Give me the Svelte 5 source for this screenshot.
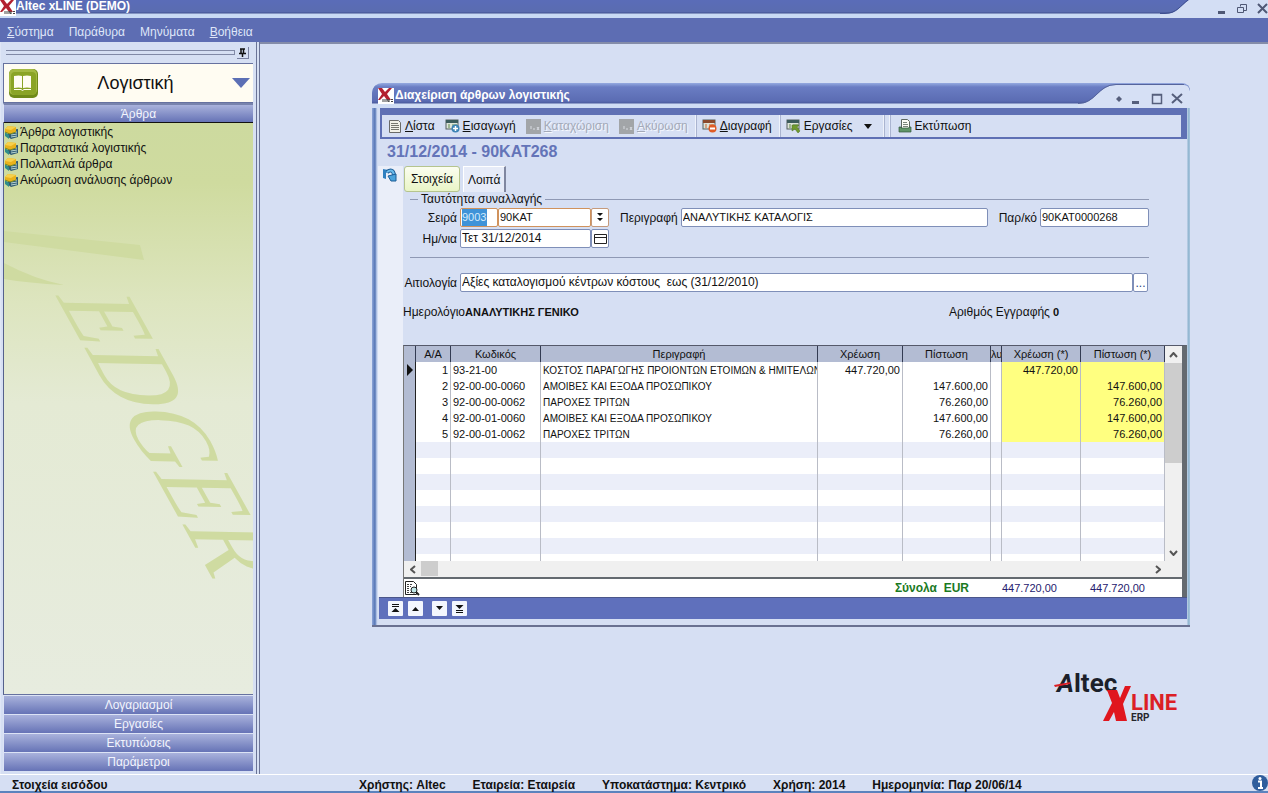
<script>
  const menus = ["Σύστημα", "Παράθυρα", "Μηνύματα", "Βοήθεια"];
  const shortcuts = ["Άρθρα λογιστικής", "Παραστατικά λογιστικής", "Πολλαπλά άρθρα", "Ακύρωση ανάλυσης άρθρων"];
  const groups = ["Λογαριασμοί", "Εργασίες", "Εκτυπώσεις", "Παράμετροι"];

  const columns = ["Α/Α", "Κωδικός", "Περιγραφή", "Χρέωση", "Πίστωση", "λυ", "Χρέωση (*)", "Πίστωση (*)"];
  const entries = [
    { code: "93-21-00", text: "ΚΟΣΤΟΣ ΠΑΡΑΓΩΓΗΣ ΠΡΟΙΟΝΤΩΝ ΕΤΟΙΜΩΝ & ΗΜΙΤΕΛΩΝ", debit: "447.720,00", credit: "" },
    { code: "92-00-00-0060", text: "ΑΜΟΙΒΕΣ ΚΑΙ ΕΞΟΔΑ ΠΡΟΣΩΠΙΚΟΥ", debit: "", credit: "147.600,00" },
    { code: "92-00-00-0062", text: "ΠΑΡΟΧΕΣ ΤΡΙΤΩΝ", debit: "", credit: "76.260,00" },
    { code: "92-00-01-0060", text: "ΑΜΟΙΒΕΣ ΚΑΙ ΕΞΟΔΑ ΠΡΟΣΩΠΙΚΟΥ", debit: "", credit: "147.600,00" },
    { code: "92-00-01-0062", text: "ΠΑΡΟΧΕΣ ΤΡΙΤΩΝ", debit: "", credit: "76.260,00" }
  ];
  const emptyRows = [0, 1, 2, 3, 4, 5, 6, 7];

  let series = "9003";
  let seriesName = "90ΚΑΤ";
  let date = "Τετ 31/12/2014";
  let description = "ΑΝΑΛΥΤΙΚΗΣ ΚΑΤΑΛΟΓΙΣ";
  let voucher = "90ΚΑΤ0000268";
  let reason = "Αξίες καταλογισμού κέντρων κόστους  εως (31/12/2010)";
</script>

<style>
  :global(body) {
    margin: 0;
    background: #d6dff3;
  }
  .app {
    display: flex;
    flex-direction: column;
    min-height: 100vh;
    overflow: hidden;
    font-family: "Liberation Sans", Arial, sans-serif;
    font-size: 12px;
    line-height: 16px;
    color: #111;
    background: #d6dff3;
  }
  button,
  input {
    box-sizing: border-box;
    margin: 0;
    font: inherit;
    color: inherit;
  }
  button {
    display: flex;
    align-items: center;
    justify-content: center;
    padding: 0;
    border: 0;
    background: none;
    white-space: nowrap;
  }
  svg {
    display: block;
    flex: none;
  }

  /* main title bar and menu */
  .titlebar {
    display: flex;
    height: 18px;
    background: linear-gradient(#5a6cb8 0, #5a6cb0 12px, #3f4f90 13px, #c9daf5 14px, #c9daf5 100%);
  }
  .titlebar h1 {
    flex: 1;
    margin: 0;
    font-size: 12px;
    line-height: 12px;
    color: #fff;
  }
  .menu {
    display: flex;
    align-items: center;
    gap: 15px;
    height: 20px;
    padding: 4px 0 0 7px;
    background: #5d6db3;
  }
  .menu button {
    display: block;
    color: #dfe6f8;
  }
  .menu button:first-child::first-letter,
  .menu button:last-child::first-letter {
    text-decoration: underline;
  }
  .tools button span {
    display: block;
  }
  .tools button span::first-letter {
    text-decoration: underline;
  }
  .main {
    display: flex;
    flex: 1;
  }

  /* sidebar */
  .sidebar {
    display: flex;
    flex: none;
    flex-direction: column;
    width: 250px;
    padding: 0 3px 3px 2px;
    border-left: 1px solid #dfe6f6;
    border-right: 4px double #6a7396;
    background: #d6dff3;
  }
  .grip {
    display: flex;
    align-items: center;
    gap: 2px;
    height: 21px;
    padding: 0 4px 0 3px;
  }
  .grip i {
    flex: 1;
    height: 3px;
    border: solid #8189a6;
    border-width: 1px 1px 1px 0;
  }
  .pin {
    width: 12px;
    height: 12px;
    border: solid #7880a0;
    border-width: 0 1px 1px 0;
  }
  .module {
    display: flex;
    align-items: center;
    height: 38px;
    padding: 0 3px 0 4px;
    border: 1px solid #66719f;
    border-right: 0;
    background: #fffcf2;
  }
  .module h2 {
    flex: 1;
    margin: 0;
    font-size: 18px;
    line-height: 24px;
    font-weight: normal;
    text-align: center;
  }
  .group {
    width: 100%;
    height: 19px;
    padding-left: 20px;
    border: solid #dce3f5;
    border-width: 1px 0 0 1px;
    color: #f3f5fd;
    background: linear-gradient(#a9b2dc, #6673b6);
  }
  .group.open {
    height: 20px;
    border-bottom: 1px solid #111;
    border-top: 2px solid #7883ad;
  }
  .shortcuts {
    position: relative;
    flex: 1;
    overflow: hidden;
    border-left: 1px solid #55618c;
    border-bottom: 1px solid #66719f;
    background: linear-gradient(#cdda9f 0, #cfdb9f 60px, #dde5bf 180px, #e4ead4 280px, #e7ecdf 100%);
  }
  .backdrop {
    position: absolute;
    top: 0;
    left: 0;
  }
  .shortcuts ul {
    position: relative;
    margin: 0;
    padding: 1px 0 0;
    list-style: none;
  }
  .shortcuts button {
    gap: 1px;
    height: 16px;
  }

  /* desktop and window */
  .desktop {
    display: flex;
    flex: 1;
    flex-direction: column;
    min-width: 0;
    padding: 39px 78px 0 112px;
    border-top: 2px solid #848ca8;
  }
  .window {
    padding: 0 3px 6px 6px;
    border-radius: 10px 8px 0 0;
    background: linear-gradient(90deg, #8ea6d8 0, #5575b5 3px, #c8d6f0 5px, #d6dff3 6px, #d6dff3 calc(100% - 3px), #8fb4cf calc(100% - 2px), #a6c4dc 100%);
    border-bottom: 2px solid #6a7191;
  }
  .caption {
    display: flex;
    align-items: stretch;
    height: 25px;
    margin: 0 -3px 0 -6px;
    padding-left: 6px;
    border-radius: 10px 8px 0 0;
    background: linear-gradient(#95aae0 0, #6a7dc3 4px, #5b6cb3 18px, #4c5c9f 20px, #d0ddf5 21px, #d0ddf5 100%);
    overflow: hidden;
  }
  .caption h2 {
    flex: 1;
    margin: 0;
    padding-left: 1px;
    font-size: 12px;
    line-height: 25px;
    color: #fff;
  }
  .caption > :global(svg:first-child) {
    margin-top: 5px;
  }
  .tools {
    display: flex;
    align-items: center;
    height: 22px;
    margin-left: 2px;
    padding-left: 2px;
    border: solid #5f70b4;
    border-width: 7px 6px 2px 2px;
    background: #d6dff3;
  }
  .tools button {
    gap: 3px;
    padding: 0 6px 0 4px;
  }
  .tools button:disabled {
    color: #a3a9b8;
    text-shadow: 1px 1px #f4f7fe;
  }
  .tools hr {
    width: 1px;
    height: 22px;
    margin: 0 1px;
    border: solid #aab4d0;
    border-width: 0 1px 0 0;
    background: #eef2fb;
  }
  .tools hr + hr {
    margin: 0 3px;
  }
  .record {
    margin: 0;
    padding: 3px 9px 4px;
    font-size: 16px;
    line-height: 20px;
    color: #6474b8;
  }
  .client {
    display: flex;
  }
  .rail {
    width: 25px;
    background: #eaeef9;
  }
  .rail button {
    margin: 2px 0 0 4px;
  }
  .content {
    flex: 1;
    min-width: 0;
  }
  .tabs {
    display: flex;
    align-items: flex-end;
    height: 26px;
    gap: 3px;
    padding-left: 1px;
  }
  .tabs button {
    height: 26px;
    padding: 0 4px;
    border: 1px solid #fff;
    border-right: 2px solid #8087a0;
    border-bottom: 0;
    background: #e6ebf8;
  }
  .tabs button.active {
    padding: 0 6px;
    border: 1px solid #b5c48e;
    border-radius: 3px;
    background: linear-gradient(#fbfdf0, #e9f5c6);
  }

  /* form */
  fieldset {
    height: 66px;
    margin: 0 38px 0 7px;
    padding: 0;
    border: solid #8f99b4;
    border-width: 1px 0;
    box-sizing: border-box;
    min-width: 0;
  }
  legend {
    margin-left: 8px;
    padding: 0 3px;
    line-height: 15px;
  }
  .line {
    display: flex;
    align-items: center;
    height: 21px;
  }
  .line label {
    flex: none;
    padding-right: 3px;
    text-align: right;
    white-space: nowrap;
  }
  .line label.lead {
    width: 47px;
  }
  .line.wide label.lead {
    width: 54px;
  }
  .line input,
  .line button {
    height: 19px;
    min-width: 0;
    border: 1px solid #7f8fb8;
    border-radius: 2px;
    background: #fff;
  }
  .line input {
    padding: 0 1px 2px;
    font-size: 11px;
  }
  .line button {
    width: 18px;
    flex: none;
  }
  .line input.series {
    width: 38px;
    border-color: #d0925c;
    color: #d6ebfb;
    background: linear-gradient(90deg, #fff 1px, #3f93d8 1px, #3f93d8 26px, #fff 26px);
  }
  .line input.name {
    width: 93px;
    border-color: #d0925c;
  }
  .line button.pick {
    border-color: #c59a7c;
  }
  .line input.date {
    width: 131px;
    font-size: 12px;
  }
  .line input.grow {
    flex: 1;
  }
  .line input.voucher {
    width: 109px;
  }
  .line .gap {
    margin-left: 11px;
  }
  .line.wide {
    padding: 14px 39px 0 0;
  }
  .line.wide input {
    font-size: 12px;
  }
  .line button.more {
    width: 15px;
    color: #2c4486;
  }
  .journal {
    display: flex;
    padding: 11px 128px 25px 0;
  }
  .journal b {
    flex: 1;
    font-size: 11px;
  }
  .journal .number {
    flex: none;
    padding-left: 3px;
  }

  /* entries */
  .grid {
    border-top: 1px solid #55596a;
    border-right: 5px solid #646a70;
    border-left: 1px solid #777;
    background: #f0f0f0;
  }
  .scroller {
    display: flex;
    height: 215px;
  }
  .rows {
    flex: 1;
    min-width: 0;
    overflow: hidden;
  }
  table {
    width: 100%;
    table-layout: fixed;
    border-collapse: separate;
    border-spacing: 0;
    background: #fff;
    font-size: 11px;
  }
  th {
    height: 16px;
    padding: 0;
    overflow: hidden;
    border-right: 1px solid #333b52;
    background: #b3bcd3;
    font-weight: normal;
    line-height: 16px;
    box-sizing: border-box;
  }
  td {
    height: 16px;
    padding: 0 2px;
    box-sizing: border-box;
    overflow: hidden;
    border-right: 1px solid #b9bcc6;
    line-height: 16px;
    white-space: nowrap;
  }
  td.mark {
    padding: 0;
    border-right: 1px solid #222;
    background: #b3bcd3;
  }
  td.text {
    padding-top: 1px;
    font-size: 10px;
    line-height: 15px;
  }
  td.num {
    text-align: right;
  }
  td.base {
    background: #ffff80;
  }
  tr.shade td:not(.mark) {
    background: #ebeef9;
  }
  .c-mark {
    width: 12px;
  }
  .c-no {
    width: 35px;
  }
  .c-code {
    width: 90px;
  }
  .c-debit {
    width: 85px;
  }
  .c-credit {
    width: 88px;
  }
  .c-thin {
    width: 11px;
  }
  .c-base {
    width: 79px;
  }
  .c-last {
    width: 84px;
  }
  .vbar {
    display: flex;
    flex-direction: column;
    width: 17px;
  }
  .vbar button {
    height: 17px;
  }
  .vbar i {
    height: 100px;
    margin-bottom: auto;
    background: #cdcdcd;
  }
  .hbar {
    display: flex;
    height: 16px;
    padding-right: 16px;
    border-bottom: 2px solid #646a70;
  }
  .hbar button {
    width: 17px;
  }
  .hbar i {
    width: 17px;
    height: 15px;
    margin-right: auto;
    background: #cdcdcd;
  }
  .totals {
    display: flex;
    align-items: center;
    height: 18px;
    padding-right: 37px;
    background: #fff;
  }
  .totals button {
    margin-right: auto;
  }
  .totals b {
    color: #1b7a1f;
    white-space: pre;
  }
  .totals output {
    width: 88px;
    text-align: right;
    font-size: 11px;
    color: #25206e;
  }
  .pager {
    display: flex;
    gap: 5px;
    align-items: center;
    height: 21px;
    margin-left: 1px;
    padding-left: 9px;
    border-top: 1px solid #4b568a;
    background: #5f70bc;
  }
  .pager button {
    width: 15px;
    height: 15px;
    border-radius: 1px;
    background: #f3f6fd;
  }
  .pager button:nth-child(3) {
    margin-left: 4px;
  }
  .brand {
    align-self: flex-end;
    margin: 40px 10px 40px 0;
  }

  /* status */
  .status {
    display: flex;
    height: 16px;
    padding-left: 12px;
    border-top: 1px solid #fff;
    border-bottom: 2px solid #5c83bd;
    font-weight: bold;
    line-height: 20px;
    white-space: nowrap;
  }
  .status span {
    padding-right: 27px;
  }
  .status .state {
    width: 320px;
  }
  .status svg {
    margin-left: auto;
  }
</style>

{#snippet xlogo()}
  <svg width="16" height="16" viewBox="0 0 16 16" aria-hidden="true">
    <rect width="16" height="16" fill="#fff" />
    <path d="M0 0h4l3 4 4-4h3L9 6l4 6h-4L6 8l-4 4H0l4-6z" fill="#b3202f" />
    <path d="M5 11v3M7 14v-3M9 14v-3l2 3v-3M13 11.500h2M13 13.500h2" stroke="#444" fill="none" />
  </svg>
{/snippet}

{#snippet form(mark)}
  <svg width="15" height="14" viewBox="0 0 15 14" aria-hidden="true">
    <rect x="1" y="1" width="12" height="9" fill="#dde3d8" stroke="#55605f" />
    <rect x="1" y="1" width="12" height="3" fill={mark === "del" ? "#8b4a2c" : "#3c5b5b"} />
    <path d="M3 6h2M3 8h2M7 6h5" stroke={mark === "del" ? "#c8642f" : "#5f8a4c"} />
    {#if mark === "add"}
      <circle cx="10.500" cy="9.500" r="4" fill="#3d83b5" />
      <path d="M8 9.500h5M10.500 7v5" stroke="#fff" stroke-width="1.500" />
    {:else if mark === "del"}
      <circle cx="10.500" cy="9.500" r="4" fill="#e05c26" />
      <path d="M8 9.500h5" stroke="#fff" stroke-width="2" />
    {:else}
      <path d="M6 6h7l-2 2 3 4-2 2-3-4-3 2z" fill="#6f9a2e" stroke="#4a6e22" stroke-width=".5" />
    {/if}
  </svg>
{/snippet}

{#snippet faded()}
  <svg width="15" height="15" viewBox="0 0 15 15" aria-hidden="true">
    <rect width="15" height="15" fill="#a2a5a8" />
    <path d="M5 7v3M7 10h2M11 8l2 3M13 8l-2 3" stroke="#d9dce2" fill="none" />
  </svg>
{/snippet}

<div class="app">
  <header>
    <div class="titlebar">
      {@render xlogo()}
      <h1>Altec xLINE (DEMO)</h1>
      <svg width="108" height="18" viewBox="0 0 108 18" aria-label="Παράθυρο εφαρμογής" role="img">
        <path d="M0 14H5C17 14 20 6 29 0H108V18H0z" fill="#d3def4" />
        <path d="M0 13.500H5C17 13 20 6 28 0" stroke="#3f4f90" fill="none" />
        <path d="M58 12.500h7" stroke="#4f5875" stroke-width="3" />
        <path d="M77.500 7.500h6v5h-6zM80.500 6.500v-2h6v6h-3" stroke="#4f5875" fill="none" />
        <path d="M98 4l9 9M107 4l-9 9" stroke="#4f5875" stroke-width="2" />
      </svg>
    </div>
    <nav class="menu">
      {#each menus as item}
        <button>{item}</button>
      {/each}
    </nav>
  </header>

  <div class="main">
    <aside class="sidebar">
      <div class="grip">
        <i></i>
        <button class="pin" aria-label="Καρφίτσωμα">
          <svg width="9" height="9" viewBox="0 0 9 9">
            <path d="M2 1h5M3 1v4M5.500 1v4M1 5.500h7M4.500 6v3" stroke="#111" fill="none" stroke-width="1.500" />
          </svg>
        </button>
      </div>
      <div class="module">
        <svg width="31" height="31" viewBox="0 0 31 31" aria-hidden="true">
          <rect x="1" y="1" width="29" height="29" rx="5" fill="#6f8a18" />
          <rect x="1" y="1" width="28" height="26" rx="5" fill="#a3b943" />
          <rect x="3" y="4" width="25" height="23" rx="4" fill="#8aa426" />
          <path d="M6 8q5-1 8 0v12q-3-1-8 0zM15 8q4-1 8 0v12q-4-1-8 0z" fill="#fffdf3" />
          <path d="M6 21.500h7l1.500 1 1.500-1h7" stroke="#fffdf3" fill="none" />
        </svg>
        <h2>Λογιστική</h2>
        <svg width="18" height="12" viewBox="0 0 18 12" aria-hidden="true">
          <path d="M0 1h18l-9 10z" fill="#5c6fb5" />
        </svg>
      </div>
      <button class="group open">Άρθρα</button>
      <div class="shortcuts">
        <svg class="backdrop" width="250" height="572" viewBox="0 0 250 572" aria-hidden="true">
          <g fill="#cfdba1">
            <path d="M0 108L136 122 140 137 0 119z" />
            <path d="M0 140q30 16 60 22-36-2-60-6z" />
            <text
              transform="translate(50 170) rotate(61) skewX(-30)"
              font-family="Liberation Serif, serif"
              font-size="98">EDGER</text>
          </g>
        </svg>
        <ul>
          {#each shortcuts as item}
            <li>
              <button>
                <svg width="15" height="15" viewBox="0 0 15 15" aria-hidden="true">
                  <path d="M5 5l9-1v8l-7 2-4-3z" fill="#2f5a74" />
                  <path d="M7 8l6-1M7 10l6-1M7 12l6-1" stroke="#b9d6cf" />
                  <path d="M1 7l4 3v4l-4-3z" fill="#2f8d8a" />
                  <path d="M4 1l8 1v5l-6 2-5-2V4z" fill="#e9b21c" />
                  <path d="M4 1l8 1-5 3-6-1z" fill="#f6d04c" />
                  <path d="M1 7l5 2 6-2" stroke="#7d8a1f" fill="none" />
                </svg>
                {item}
              </button>
            </li>
          {/each}
        </ul>
      </div>
      {#each groups as item}
        <button class="group">{item}</button>
      {/each}
    </aside>

    <main class="desktop">
      <section class="window">
        <div class="caption">
          {@render xlogo()}
          <h2>Διαχείριση άρθρων λογιστικής</h2>
          <svg width="112" height="25" viewBox="0 0 112 25" aria-hidden="true">
            <path d="M0 21C18 21 20 2 38 2H106Q111 2 112 8V25H0z" fill="#d6e0f5" />
            <path d="M0 20.500C18 20.500 20 1.500 38 1.500H106" stroke="#56649c" fill="none" />
            <path d="M38 16l3-3 3 3-3 3z" fill="#565f7c" />
            <path d="M54 19.500h7" stroke="#565f7c" stroke-width="3" />
            <path d="M74.500 11.500h9v9h-9zM74 12h10" stroke="#565f7c" stroke-width="1.500" fill="none" />
            <path d="M94 11l10 9M104 11l-10 9" stroke="#565f7c" stroke-width="2" />
          </svg>
        </div>
        <div class="tools">
          <button>
            <svg width="14" height="15" viewBox="0 0 14 15" aria-hidden="true">
              <path d="M1.500 1.500h9l2 2v10h-11z" fill="#f2f1e8" stroke="#6b6b68" />
              <path d="M3 4.500h7M3 6.500h8M3 8.500h8M3 10.500h8" stroke="#77776f" />
            </svg>
            <span>Λίστα</span>
          </button>
          <button>{@render form("add")}<span>Εισαγωγή</span></button>
          <button disabled>{@render faded()}<span>Καταχώριση</span></button>
          <button disabled>{@render faded()}<span>Ακύρωση</span></button>
          <hr />
          <button>{@render form("del")}<span>Διαγραφή</span></button>
          <hr />
          <button>
            {@render form("run")}Εργασίες
            <svg width="20" height="5" viewBox="0 0 20 5" aria-hidden="true">
              <path d="M8 0h8l-4 5z" fill="#111" />
            </svg>
          </button>
          <hr />
          <hr />
          <button>
            <svg width="14" height="14" viewBox="0 0 14 14" aria-hidden="true">
              <path d="M3.500.5h6l2 2v7h-8z" fill="#fbfbf6" stroke="#5c6660" />
              <path d="M5 3.500h4M5 5.500h5M5 7.500h5" stroke="#7a857c" />
              <path d="M1 8h2v1h8V8h2v5H1z" fill="#5f9568" stroke="#35573c" stroke-width=".7" />
            </svg>
            Εκτύπωση
          </button>
        </div>
        <h3 class="record">31/12/2014 - 90ΚΑΤ268</h3>

        <div class="client">
          <div class="rail">
            <button aria-label="Ανανέωση">
              <svg width="15" height="14" viewBox="0 0 15 14">
                <path d="M1 1l5 1v2l-2 1v6L1 10z" fill="#2f7fc0" />
                <path d="M5 4q6-4 7 3" stroke="#1d5c96" stroke-width="4" fill="none" />
                <path d="M5 4q6-4 7 3" stroke="#6cbcec" stroke-width="2" fill="none" />
                <path d="M6 8l8-2v7l-5 0z" fill="#4ba3dc" stroke="#1d5c96" />
              </svg>
            </button>
          </div>
          <div class="content">
            <div class="tabs">
              <button class="active">Στοιχεία</button>
              <button>Λοιπά</button>
            </div>
            <fieldset>
              <legend>Ταυτότητα συναλλαγής</legend>
              <div class="line">
                <label class="lead" for="series">Σειρά</label>
                <input id="series" class="series" bind:value={series} />
                <input class="name" aria-label="Όνομα σειράς" bind:value={seriesName} />
                <button class="pick" aria-label="Επιλογή σειράς">
                  <svg width="6" height="9" viewBox="0 0 6 9">
                    <path d="M0 0h6L3 3zM0 5h6L3 8z" fill="#111" />
                  </svg>
                </button>
                <label class="gap" for="description">Περιγραφή</label>
                <input id="description" class="grow" bind:value={description} />
                <label class="gap" for="voucher">Παρ/κό</label>
                <input id="voucher" class="voucher" bind:value={voucher} />
              </div>
              <div class="line">
                <label class="lead" for="date">Ημ/νια</label>
                <input id="date" class="date" bind:value={date} />
                <button aria-label="Ημερολόγιο">
                  <svg width="13" height="10" viewBox="0 0 13 10">
                    <path d="M.5.5h12v9H.5zM0 3.500h13" stroke="#222" fill="none" />
                  </svg>
                </button>
              </div>
            </fieldset>
            <div class="line wide">
              <label class="lead" for="reason">Αιτιολογία</label>
              <input id="reason" class="grow" bind:value={reason} />
              <button class="more">...</button>
            </div>
            <div class="journal">
              <span>Ημερολόγιο</span>
              <b>ΑΝΑΛΥΤΙΚΗΣ ΓΕΝΙΚΟ</b>
              <span>Αριθμός Εγγραφής</span>
              <b class="number">0</b>
            </div>

            <div class="grid">
              <div class="scroller">
                <div class="rows">
                  <table>
                    <colgroup>
                      <col class="c-mark" />
                      <col class="c-no" />
                      <col class="c-code" />
                      <col />
                      <col class="c-debit" />
                      <col class="c-credit" />
                      <col class="c-thin" />
                      <col class="c-base" />
                      <col class="c-last" />
                    </colgroup>
                    <thead>
                      <tr>
                        <th></th>
                        {#each columns as column}
                          <th>{column}</th>
                        {/each}
                      </tr>
                    </thead>
                    <tbody>
                      {#each entries as entry, i}
                        <tr>
                          <td class="mark">
                            {#if i === 0}
                              <svg width="10" height="12" viewBox="0 0 10 12" aria-hidden="true">
                                <path d="M3 0l6 6-6 6z" fill="#111" />
                              </svg>
                            {/if}
                          </td>
                          <td class="num">{i + 1}</td>
                          <td>{entry.code}</td>
                          <td class="text">{entry.text}</td>
                          <td class="num">{entry.debit}</td>
                          <td class="num">{entry.credit}</td>
                          <td></td>
                          <td class="num base">{entry.debit}</td>
                          <td class="num base">{entry.credit}</td>
                        </tr>
                      {/each}
                      {#each emptyRows as row}
                        <tr class:shade={row % 2 === 0}>
                          <td class="mark"></td>
                          {#each columns as column}
                            <td></td>
                          {/each}
                        </tr>
                      {/each}
                    </tbody>
                  </table>
                </div>
                <div class="vbar">
                  <button aria-label="Πάνω">
                    <svg width="9" height="6" viewBox="0 0 9 6"><path d="M1 5l3.500-4L8 5" stroke="#555" stroke-width="2" fill="none" /></svg>
                  </button>
                  <i></i>
                  <button aria-label="Κάτω">
                    <svg width="9" height="6" viewBox="0 0 9 6"><path d="M1 1l3.500 4L8 1" stroke="#555" stroke-width="2" fill="none" /></svg>
                  </button>
                </div>
              </div>
              <div class="hbar">
                <button aria-label="Αριστερά">
                  <svg width="6" height="9" viewBox="0 0 6 9"><path d="M5 1L1 4.500 5 8" stroke="#555" stroke-width="2" fill="none" /></svg>
                </button>
                <i></i>
                <button aria-label="Δεξιά">
                  <svg width="6" height="9" viewBox="0 0 6 9"><path d="M1 1l4 3.500L1 8" stroke="#555" stroke-width="2" fill="none" /></svg>
                </button>
              </div>
              <div class="totals">
                <button aria-label="Προεπισκόπηση">
                  <svg width="16" height="16" viewBox="0 0 16 16">
                    <path d="M1.500 1.500h8l3 3v10h-11z" fill="#fff" stroke="#222" />
                    <path d="M3 4.500h6M3 6.500h4M3 8.500h3M3 10.500h3M3 12.500h5" stroke="#444" stroke-dasharray="2 1" />
                    <circle cx="10" cy="10" r="3" fill="#bfe6e8" stroke="#222" />
                    <path d="M12 12l3 3" stroke="#222" stroke-width="2" />
                  </svg>
                </button>
                <b>Σύνολα  EUR</b>
                <output>447.720,00</output>
                <output>447.720,00</output>
              </div>
            </div>
          </div>
        </div>
        <div class="pager">
          <button aria-label="Πρώτη">
            <svg width="9" height="9" viewBox="0 0 9 9"><path d="M1 .5h7M1 2.500h7" stroke="#111" /><path d="M.5 8h8l-4-4z" fill="#111" /></svg>
          </button>
          <button aria-label="Προηγούμενη">
            <svg width="9" height="9" viewBox="0 0 9 9"><path d="M1 7h7L4.500 3z" fill="#111" /></svg>
          </button>
          <button aria-label="Επόμενη">
            <svg width="9" height="9" viewBox="0 0 9 9"><path d="M1 2h7L4.500 6z" fill="#111" /></svg>
          </button>
          <button aria-label="Τελευταία">
            <svg width="9" height="9" viewBox="0 0 9 9"><path d="M1 6.500h7M1 8.500h7" stroke="#111" /><path d="M.5 1h8l-4 4z" fill="#111" /></svg>
          </button>
        </div>
      </section>

      <svg class="brand" width="126" height="58" viewBox="0 0 126 58" role="img" aria-label="Altec XLINE ERP">
        <g font-family="Roboto, Liberation Sans, sans-serif" font-weight="bold">
          <text x="3" y="25" font-size="26" fill="#1c1f2a"><tspan font-style="italic">A</tspan>ltec</text>
          <text x="77" y="43" font-size="22" fill="#dc1f26">LINE</text>
          <text x="77" y="54" font-size="10" fill="#26262c">ERP</text>
        </g>
        <path d="M0 18l17-3-1 2-15 3z" fill="#dc1f26" />
        <path d="M53 23h10l3 8 5-12h6l-8 18 4 17h-11l-2-9-5 9h-6l9-18z" fill="#e0161e" />
      </svg>
    </main>
  </div>

  <footer class="status">
    <span class="state">Στοιχεία εισόδου</span>
    <span>Χρήστης: Altec</span>
    <span>Εταιρεία: Εταιρεία</span>
    <span>Υποκατάστημα: Κεντρικό</span>
    <span>Χρήση: 2014</span>
    <span>Ημερομηνία: Παρ 20/06/14</span>
    <svg width="16" height="16" viewBox="0 0 16 16" aria-hidden="true">
      <circle cx="8" cy="8" r="8" fill="#2f5d9c" />
      <path d="M6 6.500h3V13M6 13h5" stroke="#fff" stroke-width="2" fill="none" />
      <circle cx="8" cy="3.500" r="1.500" fill="#fff" />
    </svg>
  </footer>
</div>
